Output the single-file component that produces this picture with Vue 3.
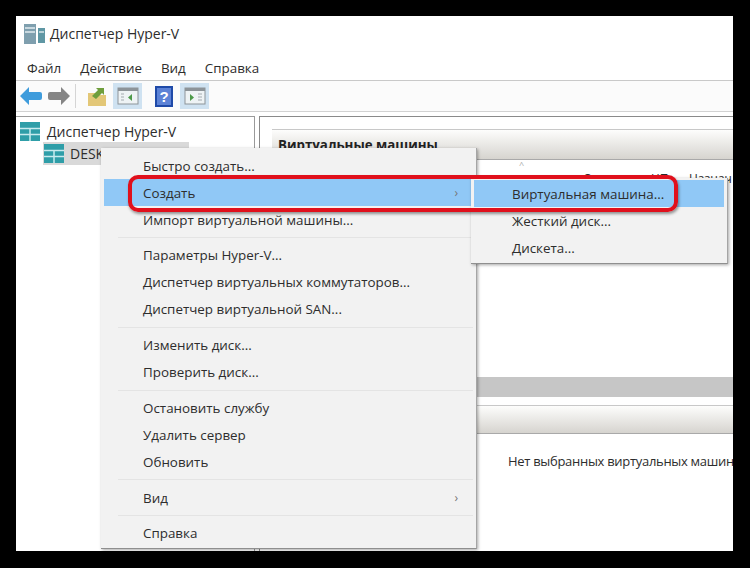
<script setup>
const menu = [
  [{ text: 'Быстро создать...' }, { text: 'Создать', arrow: true, active: true }, { text: 'Импорт виртуальной машины...' }],
  [{ text: 'Параметры Hyper-V...' }, { text: 'Диспетчер виртуальных коммутаторов...' }, { text: 'Диспетчер виртуальной SAN...' }],
  [{ text: 'Изменить диск...' }, { text: 'Проверить диск...' }],
  [{ text: 'Остановить службу' }, { text: 'Удалить сервер' }, { text: 'Обновить' }],
  [{ text: 'Вид', arrow: true }],
  [{ text: 'Справка' }]
]
const submenu = [
  { text: 'Виртуальная машина...', active: true },
  { text: 'Жесткий диск...' },
  { text: 'Дискета...' }
]
const topMenu = ['Файл', 'Действие', 'Вид', 'Справка']
</script>

<template>
  <div class="screen">
    <div class="window">
      <div class="titlebar">
        <svg class="app-icon" width="21" height="20" viewBox="0 0 21 20">
          <rect x="0" y="0" width="12" height="20" fill="#7f9fae" />
          <rect x="1" y="3" width="10" height="2" fill="#c9d8df" />
          <rect x="1" y="7" width="10" height="2" fill="#c9d8df" />
          <rect x="14" y="4" width="7" height="15" fill="#5f97a4" />
          <rect x="15" y="7" width="5" height="2" fill="#b9d2d8" />
        </svg>
        <span>Диспетчер Hyper-V</span>
      </div>
      <div class="menubar">
        <span v-for="m in topMenu" :key="m">{{ m }}</span>
      </div>
      <div class="toolbar">
        <svg width="22" height="18" viewBox="0 0 22 18"><path d="M0 9 9 0v5h11q2 0 2 2v4q0 2-2 2H9v5z" fill="#3f9cdc" /></svg>
        <svg class="next" width="22" height="18" viewBox="0 0 22 18"><path d="M22 9 13 0v5H2q-2 0-2 2v4q0 2 2 2h11v5z" fill="#858585" /></svg>
        <i class="tool-sep"></i>
        <svg class="folder" width="18" height="19" viewBox="0 0 18 19">
          <path d="M0 6h7l2 2h9v11H0z" fill="#e3c777" />
          <path d="M4 9 10 3 8 1h8v7l-2-2-6 6z" fill="#6f9e3c" />
        </svg>
        <div class="tool-on">
          <svg width="22" height="20" viewBox="0 0 22 20">
            <rect x="1" y="2" width="20" height="16" fill="#eef3f5" stroke="#8d9499" />
            <rect x="1" y="2" width="20" height="3" fill="#8d9499" />
            <path d="M15 8v7l-4-3.500z" fill="#4d9a4a" />
            <path d="M4 8h3M4 11h3M4 14h3" stroke="#a4abb0" />
          </svg>
        </div>
        <svg class="help" width="18" height="21" viewBox="0 0 18 21">
          <rect width="18" height="21" fill="#1f4aa8" />
          <rect x="2" y="2" width="14" height="17" fill="#5c82d6" />
          <text x="9" y="16" text-anchor="middle" font-size="15" font-weight="700" fill="#fff" font-family="Liberation Sans">?</text>
        </svg>
        <div class="tool-on">
          <svg width="22" height="20" viewBox="0 0 22 20">
            <rect x="1" y="2" width="20" height="16" fill="#eef3f5" stroke="#8d9499" />
            <rect x="1" y="2" width="20" height="3" fill="#8d9499" />
            <path d="M6 8v7l4-3.500z" fill="#4d9a4a" />
            <path d="M14 8h4M14 11h4M14 14h4" stroke="#a4abb0" />
          </svg>
        </div>
      </div>

      <div class="panes">
        <div class="tree">
          <div class="tree-row">
            <svg width="20" height="19" viewBox="0 0 20 19">
              <rect width="20" height="19" fill="#2f9ea8" />
              <path d="M0 6.500h20M0 12.500h20M10 6.500V19" stroke="#c8ebee" stroke-width="1.500" />
            </svg>
            <span>Диспетчер Hyper-V</span>
          </div>
          <div class="tree-row child">
            <svg width="20" height="19" viewBox="0 0 20 19">
              <rect width="20" height="19" fill="#2f9ea8" />
              <path d="M0 6.500h20M0 12.500h20M10 6.500V19" stroke="#c8ebee" stroke-width="1.500" />
            </svg>
            <span>DESKTOP</span>
          </div>
        </div>
        <div class="content">
          <div class="section-head first">Виртуальные машины</div>
          <div class="vm-table">
            <i class="caret">^</i>
            <span class="col-a">Состояние</span>
            <span class="col-b">ЦП</span>
            <span class="col-c">Назнач</span>
          </div>
          <div class="grey-band"></div>
          <div class="section-head second"></div>
          <p class="empty">Нет выбранных виртуальных машин</p>
        </div>
      </div>

      <div class="menu">
        <template v-for="(group, i) in menu" :key="i">
          <i v-if="i" class="sep"></i>
          <div v-for="item in group" :key="item.text" class="item" :class="{ active: item.active }">
            <span>{{ item.text }}</span>
            <b v-if="item.arrow" class="arrow">›</b>
          </div>
        </template>
      </div>
      <div class="menu sub">
        <div v-for="item in submenu" :key="item.text" class="item" :class="{ active: item.active }">
          <span>{{ item.text }}</span>
        </div>
      </div>
      <div class="callout"></div>
    </div>
  </div>
</template>

<style>
body { background: #000; }
</style>

<style scoped>
.screen {
  width: 750px;
  height: 568px;
  box-sizing: border-box;
  padding: 16px 17px 17px 16px;
  background: #000;
  font-family: "Open Sans", "Noto Sans", sans-serif;
  color: #2d2d2d;
  overflow: hidden;
}

.window {
  position: relative;
  height: 535px;
  background: #fff;
  display: flex;
  flex-direction: column;
  overflow: hidden;
}

.titlebar {
  height: 39px;
  box-sizing: border-box;
  padding: 0 0 4px 8px;
  display: flex;
  align-items: center;
  gap: 5px;
  font-size: 14px;
}

.menubar {
  height: 25px;
  padding-left: 11px;
  display: flex;
  align-items: center;
  gap: 19px;
  font-size: 13.4px;
  border-bottom: 1px solid #c9c9c9;
}

.toolbar {
  height: 31px;
  padding-left: 4px;
  display: flex;
  align-items: center;
  gap: 3px;
  background: #fbfbfb;
  border-bottom: 1px solid #d2d2d2;
  box-sizing: border-box;
}

.next {
  margin-left: 3px;
}

.tool-sep {
  width: 1px;
  height: 24px;
  margin: 0 9px 0 2px;
  background: #d5d5d5;
}

.tool-on {
  width: 29px;
  height: 26px;
  margin: 0 10px 0 4px;
  display: flex;
  align-items: center;
  justify-content: center;
  background: #cfe2f1;
}

.panes {
  flex: 1;
  display: grid;
  grid-template-columns: 239px 1fr;
  column-gap: 4px;
  padding-top: 4px;
  min-height: 0;
}

.tree {
  border-top: 1px solid #9a9a9a;
  border-right: 1px solid #9a9a9a;
  padding-top: 3px;
  font-size: 14px;
}

.tree-row {
  height: 22px;
  padding-left: 4px;
  display: flex;
  align-items: center;
  gap: 7px;
}

.tree-row.child {
  margin: 0 65px 0 27px;
  padding-left: 1px;
  gap: 6px;
  background: #d9d9d9;
  height: 23px;
}

.content {
  border-top: 1px solid #8a8a8a;
  border-left: 1px solid #8a8a8a;
  padding: 12px 0 0 12px;
  display: flex;
  flex-direction: column;
  min-width: 0;
}

.section-head {
  background: linear-gradient(#fdfdfc, #d6d4cf);
  border-top: 1px solid #c8c8c8;
  border-bottom: 1px solid #a9a9a9;
  font-size: 13.3px;
  font-weight: 700;
  color: #222;
  box-sizing: border-box;
}

.section-head.first {
  height: 31px;
  padding: 6px 0 0 6px;
}

.section-head.second {
  height: 29px;
  margin-top: 8px;
}

.vm-table {
  height: 217px;
  position: relative;
  font-size: 12px;
  white-space: nowrap;
}

.caret { position: absolute; left: 247px; top: -2px; font-style: normal; font-size: 9px; color: #aaa; }
.col-a { position: absolute; left: 311px; top: 10px; }
.col-b { position: absolute; left: 379px; top: 10px; }
.col-c { position: absolute; left: 417px; top: 10px; }

.grey-band {
  height: 20px;
  background: #c6c6c6;
}

.empty {
  margin: 18px 0 0 236px;
  font-size: 13px;
  letter-spacing: -0.3px;
  white-space: nowrap;
}

.menu {
  position: absolute;
  left: 85px;
  top: 132px;
  width: 376px;
  height: 401px;
  box-sizing: border-box;
  padding: 4px 3px;
  background: #f2f2f2;
  border-right: 1px solid #a5a5a5;
  border-bottom: 1px solid #8f8f8f;
  box-shadow: 1px 1px 3px rgba(0, 0, 0, 0.35);
  font-size: 13.4px;
}

.menu.sub {
  left: 455px;
  top: 162px;
  width: 257px;
  height: 86px;
  padding: 2px 3px;
}

.item {
  height: 27px;
  padding-left: 39px;
  display: flex;
  align-items: center;
  justify-content: space-between;
  white-space: nowrap;
}

.sub .item {
  padding-left: 38px;
}

.item.active {
  background: #90c8f6;
}

.arrow {
  margin-right: 15px;
  font-weight: 400;
  color: #777;
  font-size: 12px;
}

.sep {
  display: block;
  height: 1px;
  margin: 4px 0 3.8px 14px;
  background: #e4e4e4;
}

.callout {
  position: absolute;
  left: 112px;
  top: 159px;
  width: 550px;
  height: 37px;
  box-sizing: border-box;
  border: 4px solid #e0101c;
  border-radius: 10px;
  box-shadow: 1px 2px 3px rgba(0, 0, 0, 0.4);
}
</style>
